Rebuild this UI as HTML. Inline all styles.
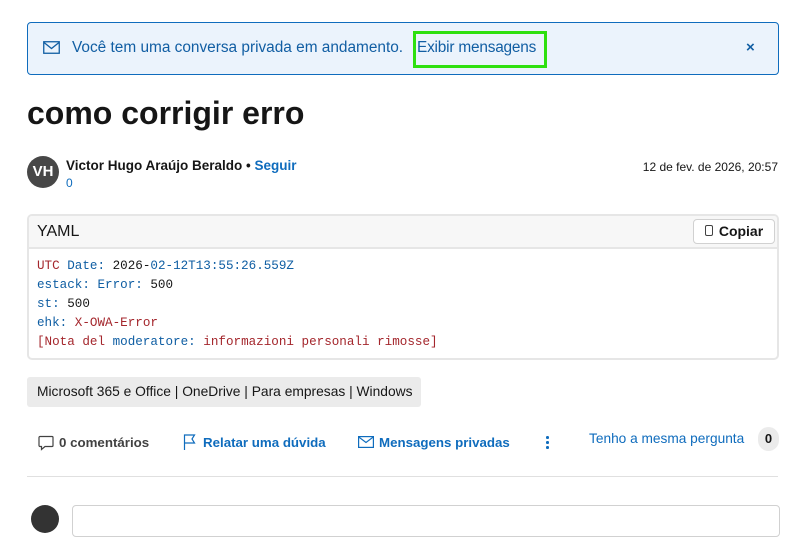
<!DOCTYPE html>
<html><head><style>
body{margin:0;width:790px;height:508px;overflow:hidden;background:#fff;font-family:"Liberation Sans",sans-serif;color:#161616;position:relative}
.a{position:absolute}
.blue{color:#0f6cbd}
</style></head><body>
<div class="a" style="left:27px;top:22px;width:750px;height:51px;background:#ebf3fc;border:1px solid #0f6cbd;border-radius:4px"></div>
<svg class="a" style="left:43px;top:41px" width="17" height="13" viewBox="0 0 17 13"><rect x="0.75" y="0.75" width="15.5" height="11.5" fill="none" stroke="#115ea3" stroke-width="1.3"/><path d="M1 1.5 L8.5 7.5 L16 1.5" fill="none" stroke="#115ea3" stroke-width="1.3"/></svg>
<div class="a" style="left:72px;top:39px;font-size:15.4px;color:#115ea3;white-space:nowrap">Você tem uma conversa privada em andamento.</div>
<div class="a" style="left:417px;top:39px;font-size:15.4px;color:#115ea3;white-space:nowrap;letter-spacing:-0.2px">Exibir mensagens</div>
<div class="a" style="left:413px;top:31px;width:128px;height:31px;border:3px solid #2ee00f"></div>
<div class="a" style="left:746px;top:39px;font-size:15px;font-weight:bold;color:#115ea3">×</div>
<div class="a" style="left:27px;top:95px;font-size:32px;font-weight:bold;color:#161616">como corrigir erro</div>
<div class="a" style="left:27px;top:156px;width:32px;height:32px;border-radius:50%;background:#474747;color:#fff;font-weight:bold;font-size:15px;line-height:32px;text-align:center">VH</div>
<div class="a" style="left:66px;top:158px;font-size:13.5px;font-weight:bold;white-space:nowrap">Victor Hugo Araújo Beraldo • <span class="blue">Seguir</span></div>
<div class="a blue" style="left:66px;top:176px;font-size:12px">0</div>
<div class="a" style="right:12px;top:160px;font-size:12px">12 de fev. de 2026, 20:57</div>
<div class="a" style="left:27px;top:214px;width:748px;height:142px;border:2px solid #e6e6e6;border-radius:5px;overflow:hidden">
 <div style="height:31px;background:#f7f7f7;border-bottom:2px solid #e6e6e6;position:relative">
  <div class="a" style="left:8px;top:7px;font-size:16px">YAML</div>
  <div class="a" style="right:2px;top:3px;width:80px;height:23px;background:#fff;border:1px solid #d1d1d1;border-radius:4px;font-size:14px;font-weight:bold;line-height:23px;text-align:center"><span style="display:inline-block;width:6px;height:9px;border:1.5px solid #424242;border-radius:2px;margin-right:6px"></span>Copiar</div>
 </div>
 <div style="padding:8px 0 0 8px;font-family:'Liberation Mono',monospace;font-size:12.6px;line-height:19px;color:#0f5ea3">
  <div><span style="color:#a4262c">UTC</span> Date: <span style="color:#161616">2026-</span>02-12T13:55:26.559Z</div>
  <div>estack: Error: <span style="color:#161616">500</span></div>
  <div>st: <span style="color:#161616">500</span></div>
  <div>ehk: <span style="color:#a4262c">X-OWA-Error</span></div>
  <div style="color:#a4262c">[Nota del <span style="color:#0f5ea3">moderatore:</span> informazioni personali rimosse]</div>
 </div>
</div>
<div class="a" style="left:27px;top:377px;width:394px;height:30px;background:#ebebeb;border-radius:3px;font-size:13.8px;line-height:30px;text-indent:10px;white-space:nowrap">Microsoft 365 e Office | OneDrive | Para empresas | Windows</div>
<svg class="a" style="left:38px;top:435px" width="16" height="16" viewBox="0 0 16 16"><path d="M2 1.5h12a1 1 0 0 1 1 1v8a1 1 0 0 1-1 1H7l-3.5 3v-3H2a1 1 0 0 1-1-1v-8a1 1 0 0 1 1-1z" fill="none" stroke="#424242" stroke-width="1.2"/></svg>
<div class="a" style="left:59px;top:435px;font-size:13.3px;font-weight:bold;color:#424242">0 comentários</div>
<svg class="a" style="left:183px;top:434px" width="14" height="16" viewBox="0 0 14 16"><path d="M1.5 16V1h10l-2.5 4 2.5 4h-10" fill="none" stroke="#0f6cbd" stroke-width="1.2"/></svg>
<div class="a blue" style="left:203px;top:435px;font-size:13.3px;font-weight:bold">Relatar uma dúvida</div>
<svg class="a" style="left:358px;top:436px" width="16" height="12" viewBox="0 0 16 12"><rect x="0.6" y="0.6" width="14.8" height="10.8" fill="none" stroke="#0f6cbd" stroke-width="1.2"/><path d="M1 1.2 L8 6.5 L15 1.2" fill="none" stroke="#0f6cbd" stroke-width="1.2"/></svg>
<div class="a blue" style="left:379px;top:435px;font-size:13.3px;font-weight:bold">Mensagens privadas</div>
<div class="a" style="left:546px;top:436px;width:3px">
 <div style="width:2.5px;height:2.5px;background:#0f6cbd;border-radius:50%;margin-bottom:2.5px"></div>
 <div style="width:2.5px;height:2.5px;background:#0f6cbd;border-radius:50%;margin-bottom:2.5px"></div>
 <div style="width:2.5px;height:2.5px;background:#0f6cbd;border-radius:50%"></div>
</div>
<div class="a blue" style="left:589px;top:431px;font-size:13.7px">Tenho a mesma pergunta</div>
<div class="a" style="left:758px;top:427px;width:21px;height:24px;border-radius:11px;background:#ebebeb;font-size:13px;font-weight:bold;line-height:24px;text-align:center">0</div>
<div class="a" style="left:27px;top:476px;width:751px;height:1px;background:#e0e0e0"></div>
<div class="a" style="left:31px;top:505px;width:28px;height:28px;border-radius:50%;background:#333"></div>
<div class="a" style="left:72px;top:505px;width:706px;height:30px;border:1px solid #d1d1d1;border-radius:4px"></div>
</body></html>
